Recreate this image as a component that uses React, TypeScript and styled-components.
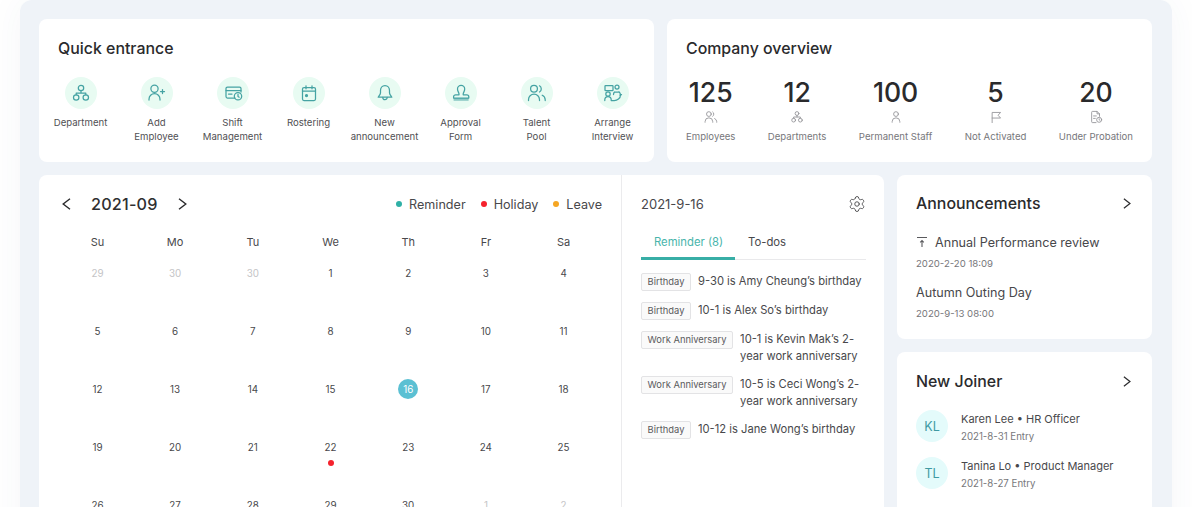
import styled, { createGlobalStyle } from 'styled-components'
import { Settings } from 'lucide-react'
import type { ReactNode } from 'react'

const GlobalStyle = createGlobalStyle`
  html, body {
    margin: 0;
    height: 507px;
    overflow: hidden;
    background: #fff;
    font-family: Inter, "Noto Sans", "Liberation Sans", sans-serif;
    color: #2c2c2e;
  }
  * { box-sizing: border-box; }
`

const Shell = styled.div`
  width: 1152px;
  min-height: 560px;
  margin: 0 20px;
  padding: 19px 20px 0 19px;
  background: #eff3f8;
  border-radius: 12px 12px 0 0;
  box-shadow: 0 0 36px rgba(50, 70, 120, 0.05);
  display: flex;
  flex-direction: column;
  gap: 13px;
`

const Row = styled.div`
  display: flex;
  gap: 13px;
`

const Card = styled.section<{ $width: number; $height?: number }>`
  width: ${({ $width }) => $width}px;
  height: ${({ $height }) => ($height ? `${$height}px` : 'auto')};
  background: #fff;
  border-radius: 8px;
`

const TopTitle = styled.h2`
  margin: 0;
  height: 20px;
  font-size: 15.9px;
  line-height: 20px;
  font-weight: 500;
  color: #2a2a2c;
`

const QuickCard = styled(Card)`
  padding: 20px 3.5px 0;
  ${TopTitle} {
    padding-left: 15.5px;
  }
`

const QuickGrid = styled.div`
  display: grid;
  grid-template-columns: repeat(8, 76px);
  margin-top: 18px;
`

const QuickItem = styled.div`
  display: flex;
  flex-direction: column;
  align-items: center;
  text-align: center;
  font-size: 9.6px;
  line-height: 14px;
  color: #505053;
`

const IconCircle = styled.div`
  width: 32px;
  height: 32px;
  margin-bottom: 7px;
  border-radius: 50%;
  background: #e8fbf2;
  color: #45a3a3;
  display: flex;
  align-items: center;
  justify-content: center;
`

const OverviewCard = styled(Card)`
  padding: 20px 19px 0;
`

const StatRow = styled.div`
  display: flex;
  justify-content: space-between;
  margin-top: 15px;
`

const Stat = styled.div`
  display: flex;
  flex-direction: column;
  align-items: center;
`

const StatNumber = styled.div`
  font-size: 26.6px;
  line-height: 36px;
  font-weight: 500;
  color: #2a2a2c;
`

const StatIcon = styled.div`
  height: 14px;
  margin-bottom: 6px;
  display: flex;
  color: #949498;
`

const StatLabel = styled.div`
  font-size: 9.6px;
  line-height: 14px;
  color: #77777b;
`

const CalendarCard = styled(Card)`
  display: flex;
  height: 400px;
`

const MonthPane = styled.div`
  width: 582px;
  padding: 0 19px 0 19.6px;
`

const MonthHeader = styled.div`
  height: 58px;
  display: flex;
  align-items: center;
`

const MonthNav = styled.div`
  display: flex;
  align-items: center;
  gap: 20px;
  margin-left: 3.4px;
  color: #2a2a2c;
`

const MonthLabel = styled.div`
  font-size: 16.2px;
  font-weight: 500;
  letter-spacing: 0.2px;
  color: #2f2f31;
`

const Legend = styled.div`
  margin-left: auto;
  display: flex;
  gap: 15px;
  font-size: 12.6px;
  color: #48484b;
`

const LegendItem = styled.div<{ $color: string }>`
  display: flex;
  align-items: center;
  gap: 7px;
  &::before {
    content: '';
    width: 6px;
    height: 6px;
    border-radius: 50%;
    background: ${({ $color }) => $color};
  }
`

const WeekGrid = styled.div`
  display: grid;
  grid-template-columns: repeat(7, 77.7px);
  margin-top: 1px;
  font-size: 11px;
  line-height: 16px;
  text-align: center;
  color: #48484b;
`

const DayGrid = styled.div`
  display: grid;
  grid-template-columns: repeat(7, 77.7px);
  grid-auto-rows: 58px;
  margin-top: 13px;
`

const DayCell = styled.div`
  display: flex;
  flex-direction: column;
  align-items: center;
  gap: 5px;
`

const DayNumber = styled.div<{ $muted?: boolean; $active?: boolean }>`
  width: 20px;
  height: 20px;
  border-radius: 50%;
  display: flex;
  align-items: center;
  justify-content: center;
  font-size: 9.8px;
  background: ${({ $active }) => ($active ? '#5bc0d3' : 'transparent')};
  color: ${({ $muted, $active }) => ($active ? '#fff' : $muted ? '#c4c4c6' : '#48484b')};
`

const DayDot = styled.div`
  width: 6px;
  height: 6px;
  margin-top: -2px;
  border-radius: 50%;
  background: #f5222d;
`

const DetailPane = styled.div`
  flex: 1;
  border-left: 1px solid #ebebed;
  padding: 0 18px 0 19px;
`

const DetailHeader = styled.div`
  height: 58px;
  display: flex;
  align-items: center;
  justify-content: space-between;
  font-size: 13px;
  color: #48484b;
`

const Tabs = styled.div`
  display: flex;
  border-bottom: 1px solid #e9e9eb;
  height: 27px;
`

const Tab = styled.div<{ $active?: boolean }>`
  width: ${({ $active }) => ($active ? '94px' : 'auto')};
  height: 27px;
  padding: 1px 0 0 13px;
  font-size: 11.3px;
  line-height: 17px;
  color: ${({ $active }) => ($active ? '#49b5ac' : '#48484b')};
  border-bottom: ${({ $active }) => ($active ? '3px solid #38aea6' : 'none')};
`

const ReminderList = styled.div`
  display: flex;
  flex-direction: column;
  gap: 11px;
  margin-top: 13px;
`

const ReminderRow = styled.div`
  display: flex;
  align-items: flex-start;
  gap: 7px;
  font-size: 11.2px;
  line-height: 17px;
  color: #48484b;
`

const Tag = styled.span`
  flex: none;
  height: 18px;
  padding: 0 5.6px;
  border: 1px solid #e3e3e5;
  border-radius: 2px;
  background: #fafafa;
  font-size: 9.4px;
  line-height: 16px;
  color: #5a5a5d;
`

const SideColumn = styled.div`
  display: flex;
  flex-direction: column;
  gap: 13px;
`

const SideCard = styled(Card)`
  padding: 0 19px;
`

const SideHeader = styled.div<{ $height: number }>`
  height: ${({ $height }) => $height}px;
  display: flex;
  align-items: center;
  justify-content: space-between;
  padding-right: 2px;
`

const SideTitle = styled.h2`
  margin: 0;
  font-size: 15.9px;
  font-weight: 500;
  color: #2a2a2c;
`

const NoticeList = styled.div`
  display: flex;
  flex-direction: column;
  gap: 12px;
  padding-top: 2px;
`

const NoticeTitle = styled.div`
  display: flex;
  align-items: center;
  gap: 7px;
  height: 18px;
  font-size: 12.6px;
  color: #48484b;
`

const SmallDate = styled.div`
  margin-top: 4.5px;
  font-size: 9.6px;
  line-height: 16px;
  color: #77777b;
`

const Joiner = styled.div`
  display: flex;
  gap: 13px;
  height: 47px;
`

const Avatar = styled.div`
  flex: none;
  width: 32px;
  height: 32px;
  border-radius: 50%;
  background: #e4fbfb;
  color: #3f9aa3;
  font-size: 12.5px;
  display: flex;
  align-items: center;
  justify-content: center;
`

const JoinerName = styled.div`
  font-size: 11px;
  line-height: 18px;
  color: #48484b;
`

const JoinerDate = styled.div`
  font-size: 9.7px;
  line-height: 18px;
  color: #77777b;
`

function Glyph({ size = 20, children }: { size?: number; children: ReactNode }) {
  return (
    <svg
      width={size}
      height={size}
      viewBox="0 0 20 20"
      fill="none"
      stroke="currentColor"
      strokeWidth={1.25}
      strokeLinecap="round"
      strokeLinejoin="round"
    >
      {children}
    </svg>
  )
}

const DepartmentIcon = ({ size }: { size?: number }) => (
  <Glyph size={size}>
    <circle cx="10" cy="5" r="2.7" />
    <circle cx="5.2" cy="14.5" r="2.7" />
    <circle cx="14.8" cy="14.5" r="2.7" />
    <path d="M10 7.7V10M5.2 11.8V10h9.6v1.8" />
  </Glyph>
)

const AddEmployeeIcon = () => (
  <Glyph>
    <circle cx="7.5" cy="5.8" r="3.6" />
    <path d="M2 17v-.8a5.5 5.5 0 0 1 11 0v.8" />
    <path d="M15.5 6.5v4M13.5 8.5h4" />
  </Glyph>
)

const ShiftIcon = () => (
  <Glyph>
    <path d="M12 15H4.5A1.5 1.5 0 0 1 3 13.5v-8A1.5 1.5 0 0 1 4.5 4h12A1.5 1.5 0 0 1 18 5.5V9" />
    <path d="M3 7.5h15M5.5 11h3.5" />
    <circle cx="15" cy="13.2" r="3.7" />
    <path d="M15 11.4v2l1.2.8" />
  </Glyph>
)

const RosterIcon = () => (
  <Glyph>
    <rect x="3.5" y="4.5" width="13" height="13" rx="1.5" />
    <path d="M7 2.8v3M13 2.8v3M3.5 8h13" />
    <circle cx="7.5" cy="12.5" r="1" fill="currentColor" />
  </Glyph>
)

const BellIcon = () => (
  <Glyph>
    <path d="M10 2.5C7 2.5 5.5 5 5.5 7.5v2.2c0 1.9-1.4 3-2.3 4.5h13.6c-.9-1.5-2.3-2.6-2.3-4.5V7.5c0-2.5-1.5-5-4.5-5z" />
    <path d="M7.8 14.4a2.2 2.2 0 0 0 4.4 0" />
  </Glyph>
)

const StampIcon = () => (
  <Glyph>
    <path d="M8 11c0-1.5-1.5-2.5-1.5-5a3.6 3.6 0 0 1 7.2 0c0 2.5-1.5 3.5-1.5 5v.8h3.6a2 2 0 0 1 2 2V15H2.6v-1.2a2 2 0 0 1 2-2H8z" />
    <rect x="2.6" y="15" width="15" height="2.8" fill="currentColor" fillOpacity={0.55} stroke="none" />
  </Glyph>
)

const PeopleIcon = ({ size }: { size?: number }) => (
  <Glyph size={size}>
    <circle cx="7" cy="5.8" r="3.4" />
    <path d="M12.5 2.8a3.6 3.6 0 0 1 0 6.2" />
    <path d="M1.5 17.5v-.8a5.5 5.5 0 0 1 11 0v.8" />
    <path d="M15.2 12.2a5 5 0 0 1 3 4.5v.8" />
  </Glyph>
)

const InterviewIcon = () => (
  <Glyph>
    <rect x="2" y="2.5" width="8" height="5" rx="0.6" />
    <circle cx="14" cy="4" r="2" />
    <circle cx="5" cy="11" r="2.2" />
    <path d="M1.8 17.5v-.7a3.2 3.2 0 0 1 6.4 0v.7h3c3 0 6.3-2 6.3-5.5a4.4 4.4 0 0 0-1.5-3.2c-1.2.5-2 .5-4.5.2-.8.8-1 1.6-1 2.5" />
    <path d="M17 12.2l1.5-.6" />
  </Glyph>
)

const PersonIcon = ({ size }: { size?: number }) => (
  <Glyph size={size}>
    <circle cx="10" cy="5.8" r="3.4" />
    <path d="M4.5 17.5v-.8a5.5 5.5 0 0 1 11 0v.8" />
  </Glyph>
)

const FlagIcon = ({ size }: { size?: number }) => (
  <Glyph size={size}>
    <path d="M4.5 18V3.5h12l-3.5 4 3.5 4h-12" />
  </Glyph>
)

const ProbationIcon = ({ size }: { size?: number }) => (
  <Glyph size={size}>
    <path d="M10 18H5a1.2 1.2 0 0 1-1.2-1.2V3.2A1.2 1.2 0 0 1 5 2h6.5L15 5.5V9" />
    <path d="M11.5 2v3.5H15M6.5 8.5h4M6.5 12h2.5" />
    <circle cx="14.5" cy="14" r="3.6" />
    <path d="M14.5 12.4V14l1 .7" />
  </Glyph>
)

const Chevron = ({ dir, width, height }: { dir: 'left' | 'right'; width: number; height: number }) => (
  <svg width={width} height={height} viewBox="0 0 9 12" fill="none" stroke="currentColor" strokeWidth={1.4} strokeLinejoin="miter">
    <path d={dir === 'left' ? 'M8 .7L1.2 6 8 11.3' : 'M1 .7L7.8 6 1 11.3'} />
  </svg>
)

const PinIcon = () => (
  <svg width="12" height="12" viewBox="0 0 12 12" fill="none" stroke="#5a5a5d" strokeWidth={1.1}>
    <path d="M1 1.5h10M6 11V4.5M4.2 6.3L6 4.5l1.8 1.8" />
  </svg>
)

const quickLinks: { label: string[]; icon: ReactNode }[] = [
  { label: ['Department'], icon: <DepartmentIcon /> },
  { label: ['Add', 'Employee'], icon: <AddEmployeeIcon /> },
  { label: ['Shift', 'Management'], icon: <ShiftIcon /> },
  { label: ['Rostering'], icon: <RosterIcon /> },
  { label: ['New', 'announcement'], icon: <BellIcon /> },
  { label: ['Approval', 'Form'], icon: <StampIcon /> },
  { label: ['Talent', 'Pool'], icon: <PeopleIcon /> },
  { label: ['Arrange', 'Interview'], icon: <InterviewIcon /> },
]

const stats = [
  { value: 125, label: 'Employees', icon: <PeopleIcon size={14} /> },
  { value: 12, label: 'Departments', icon: <DepartmentIcon size={14} /> },
  { value: 100, label: 'Permanent Staff', icon: <PersonIcon size={14} /> },
  { value: 5, label: 'Not Activated', icon: <FlagIcon size={14} /> },
  { value: 20, label: 'Under Probation', icon: <ProbationIcon size={14} /> },
]

const weekDays = ['Su', 'Mo', 'Tu', 'We', 'Th', 'Fr', 'Sa']

const days = [
  29, 30, 30, 1, 2, 3, 4,
  5, 6, 7, 8, 9, 10, 11,
  12, 13, 14, 15, 16, 17, 18,
  19, 20, 21, 22, 23, 24, 25,
  26, 27, 28, 29, 30, 1, 2,
]

const reminders = [
  { tag: 'Birthday', text: '9-30 is Amy Cheung’s birthday' },
  { tag: 'Birthday', text: '10-1 is Alex So’s birthday' },
  { tag: 'Work Anniversary', text: '10-1 is Kevin Mak’s 2-year work anniversary' },
  { tag: 'Work Anniversary', text: '10-5 is Ceci Wong’s 2-year work anniversary' },
  { tag: 'Birthday', text: '10-12 is Jane Wong’s birthday' },
]

const joiners = [
  { initials: 'KL', name: 'Karen Lee • HR Officer', date: '2021-8-31 Entry' },
  { initials: 'TL', name: 'Tanina Lo • Product Manager', date: '2021-8-27 Entry' },
]

export default function App() {
  return (
    <>
      <GlobalStyle />
      <Shell>
        <Row>
          <QuickCard $width={615} $height={143}>
            <TopTitle>Quick entrance</TopTitle>
            <QuickGrid>
              {quickLinks.map((link) => (
                <QuickItem key={link.label.join(' ')}>
                  <IconCircle>{link.icon}</IconCircle>
                  {link.label.map((line) => (
                    <div key={line}>{line}</div>
                  ))}
                </QuickItem>
              ))}
            </QuickGrid>
          </QuickCard>
          <OverviewCard $width={485} $height={143}>
            <TopTitle>Company overview</TopTitle>
            <StatRow>
              {stats.map((stat) => (
                <Stat key={stat.label}>
                  <StatNumber>{stat.value}</StatNumber>
                  <StatIcon>{stat.icon}</StatIcon>
                  <StatLabel>{stat.label}</StatLabel>
                </Stat>
              ))}
            </StatRow>
          </OverviewCard>
        </Row>
        <Row>
          <CalendarCard $width={845}>
            <MonthPane>
              <MonthHeader>
                <MonthNav>
                  <Chevron dir="left" width={9} height={12} />
                  <MonthLabel>2021-09</MonthLabel>
                  <Chevron dir="right" width={9} height={12} />
                </MonthNav>
                <Legend>
                  <LegendItem $color="#2fb0a6">Reminder</LegendItem>
                  <LegendItem $color="#f5222d">Holiday</LegendItem>
                  <LegendItem $color="#f5a623">Leave</LegendItem>
                </Legend>
              </MonthHeader>
              <WeekGrid>
                {weekDays.map((day) => (
                  <div key={day}>{day}</div>
                ))}
              </WeekGrid>
              <DayGrid>
                {days.map((day, index) => (
                  <DayCell key={index}>
                    <DayNumber $muted={index < 3 || index > 32} $active={index === 18}>
                      {day}
                    </DayNumber>
                    {index === 24 && <DayDot />}
                  </DayCell>
                ))}
              </DayGrid>
            </MonthPane>
            <DetailPane>
              <DetailHeader>
                2021-9-16
                <Settings size={18} strokeWidth={1.2} color="#48484b" />
              </DetailHeader>
              <Tabs>
                <Tab $active>Reminder (8)</Tab>
                <Tab>To-dos</Tab>
              </Tabs>
              <ReminderList>
                {reminders.map((item) => (
                  <ReminderRow key={item.text}>
                    <Tag>{item.tag}</Tag>
                    <span>{item.text}</span>
                  </ReminderRow>
                ))}
              </ReminderList>
            </DetailPane>
          </CalendarCard>
          <SideColumn>
            <SideCard $width={255} $height={164}>
              <SideHeader $height={56}>
                <SideTitle>Announcements</SideTitle>
                <Chevron dir="right" width={8} height={11} />
              </SideHeader>
              <NoticeList>
                <div>
                  <NoticeTitle>
                    <PinIcon />
                    Annual Performance review
                  </NoticeTitle>
                  <SmallDate>2020-2-20 18:09</SmallDate>
                </div>
                <div>
                  <NoticeTitle>Autumn Outing Day</NoticeTitle>
                  <SmallDate>2020-9-13 08:00</SmallDate>
                </div>
              </NoticeList>
            </SideCard>
            <SideCard $width={255} $height={180}>
              <SideHeader $height={58}>
                <SideTitle>New Joiner</SideTitle>
                <Chevron dir="right" width={8} height={11} />
              </SideHeader>
              {joiners.map((joiner) => (
                <Joiner key={joiner.initials}>
                  <Avatar>{joiner.initials}</Avatar>
                  <div>
                    <JoinerName>{joiner.name}</JoinerName>
                    <JoinerDate>{joiner.date}</JoinerDate>
                  </div>
                </Joiner>
              ))}
            </SideCard>
          </SideColumn>
        </Row>
      </Shell>
    </>
  )
}
